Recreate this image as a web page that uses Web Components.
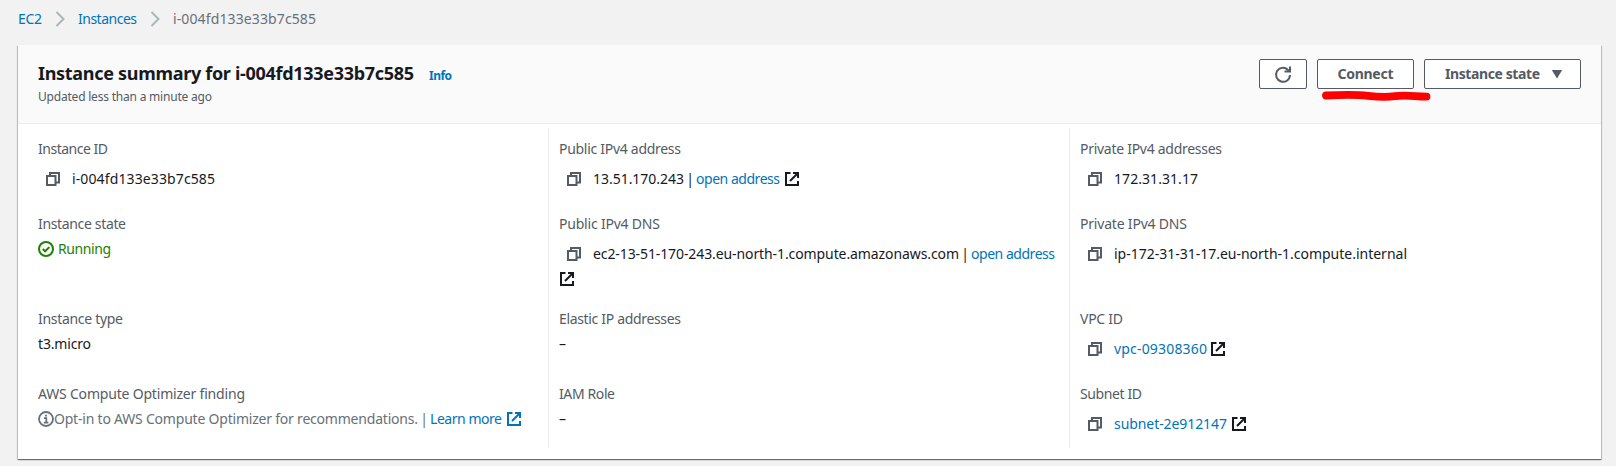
<!DOCTYPE html>
<html lang="en">
<head>
<meta charset="utf-8">
<title>Instance summary</title>
<style>
body{margin:0;background:#f2f2f2;font:14px/25px "Noto Sans","Open Sans",sans-serif;color:#16191f}
</style>
</head>
<body>
<instance-page></instance-page>
<script>
const define=(name,html,setup)=>{
  const t=document.createElement('template');t.innerHTML=html;
  customElements.define(name,class extends HTMLElement{
    connectedCallback(){
      if(this.shadowRoot)return;
      this.attachShadow({mode:'open'}).append(t.content.cloneNode(true));
      if(setup)setup.call(this,this.shadowRoot);
    }
  });
};

/* A run of text spaced out to the width in its w attribute */
define('fit-text',`<style>:host{display:inline-block;white-space:nowrap;font-variant-ligatures:none}</style><span><slot></slot></span>`,function(r){
  const w=+this.getAttribute('w'),n=this.textContent.length;
  const natural=r.querySelector('span').getBoundingClientRect().width;
  this.style.letterSpacing=(w-natural)/Math.max(1,n-1)+'px';
  this.style.width=w+'px';
});

const icons={
  copy:'<g fill="none" stroke="currentColor" stroke-width="2"><path d="M2 5h8.500v9H2z"/><path d="M5 5V2h9v9.500h-3.500"/></g>',
  external:'<g fill="none" stroke="currentColor" stroke-width="2"><path d="M6.500 2H2v12h12v-4"/><path d="M9 2h5v5M14 2L6 10"/></g>',
  check:'<g fill="none" stroke="currentColor" stroke-width="2"><circle cx="8" cy="8" r="7"/><path d="M4.800 8l2.300 2.300 4.200-4.200"/></g>',
  info:'<g fill="none" stroke="currentColor" stroke-width="1.800"><circle cx="8" cy="8" r="7"/><path d="M6 7.200h2.300v4.300M5.800 11.600h4.600M7 4.600h2"/></g>',
  refresh:'<g fill="none" stroke="currentColor" stroke-width="2"><path d="M15 9A7 7 0 1 1 12.800 3.700L15 5.500"/><path d="M15 .5V5.500H9.500"/></g>',
  chevron:'<path fill="none" stroke="currentColor" stroke-width="2" d="M4.500 1l7 7-7 7"/>',
  caret:'<path fill="currentColor" d="M2.800 4h10.400l-5.200 8.500z"/>'
};
define('ui-icon',`<style>:host{display:inline-block;width:16px;height:16px;vertical-align:-3px}svg{display:block;width:100%;height:100%;overflow:visible}</style><svg viewBox="0 0 16 16"></svg>`,function(r){
  r.querySelector('svg').innerHTML=icons[this.getAttribute('name')];
});

define('ui-link',`<style>:host{color:#0073bb}</style><slot></slot>`);

define('crumb-trail',`<style>
:host{display:flex;align-items:center;height:38px;padding-left:18px;color:#687078;line-height:38px}
ui-icon{color:#aab7b8}
</style>
<ui-link><fit-text w="24">EC2</fit-text></ui-link><ui-icon name="chevron" style="margin:0 10px"></ui-icon>
<ui-link><fit-text w="59">Instances</fit-text></ui-link><ui-icon name="chevron" style="margin:0 10px"></ui-icon>
<fit-text w="143">i-004fd133e33b7c585</fit-text>`);

define('ui-button',`<style>
:host{display:flex;align-items:center;justify-content:center;box-sizing:border-box;height:30px;border:1px solid #545b64;border-radius:2px;background:#fff;color:#545b64;font-weight:700;line-height:28px}
</style><slot></slot>`);

/* Hand-drawn marker line under a control */
define('marker-line',`<style>:host{position:absolute;left:4px;top:31px;width:110px;height:12px;pointer-events:none}svg{display:block}</style>
<svg width="110" height="12"><path d="M5 5.500C18 4.800 37 4.600 47 5.800S64 7.700 74 6.200 92 6.200 105.500 6.600" fill="none" stroke="#fe0000" stroke-width="7.800" stroke-linecap="round"/></svg>`);

define('summary-header',`<style>
:host{display:flex;justify-content:space-between;height:78px;border-bottom:1px solid #eaeded;background:#fafafa;padding:0 20px;box-sizing:content-box}
.title{display:flex;align-items:baseline;height:30px;margin-top:13px;font-size:18px;font-weight:700;line-height:30px}
.title ui-link{font-size:12px;margin-left:15px}
.sub{font-size:12px;line-height:18px;color:#545b64}
.actions{display:flex;gap:10px;margin-top:14px}
.connect{position:relative;display:flex}
</style>
<div><div class="title"><fit-text w="376">Instance summary for i-004fd133e33b7c585</fit-text><ui-link><fit-text w="23">Info</fit-text></ui-link></div>
<div class="sub"><fit-text w="174">Updated less than a minute ago</fit-text></div></div>
<div class="actions">
<ui-button style="width:48px"><ui-icon name="refresh"></ui-icon></ui-button>
<div class="connect"><ui-button style="width:97px"><fit-text w="56">Connect</fit-text></ui-button><marker-line></marker-line></div>
<ui-button style="width:157px"><fit-text w="95" style="margin-left:5px">Instance state</fit-text><ui-icon name="caret" style="margin-left:9px"></ui-icon></ui-button>
</div>`);

define('info-field',`<style>
:host{display:block}
.label{color:#545b64}
.value{white-space:nowrap}
:host([copy]) .value{padding-top:5px}
.copy{color:#545b64;margin:0 11px 0 7px;display:none}
:host([copy]) .copy{display:inline-block}
</style><div class="label"><slot name="label"></slot></div><div class="value"><ui-icon class="copy" name="copy"></ui-icon><slot></slot></div>`);

define('info-column',`<style>
:host{display:grid;grid-template-rows:75px 95px 75px 75px;height:320px;box-sizing:border-box;padding-left:10px;border-left:1px solid #eaeded}
:host([first]){border-left-color:transparent;padding-left:9px}
::slotted(info-field){padding-top:8px}
</style><slot></slot>`);

define('summary-card',`<style>
:host{display:block;box-sizing:border-box;margin:7px 0 0 18px;width:1583px;height:414px;background:#fff;box-shadow:0 1px 1px 0 rgba(0,28,36,.4),1px 1px 1px 0 rgba(0,28,36,.18),-1px 1px 1px 0 rgba(0,28,36,.18)}
.cols{display:grid;grid-template-columns:520px 521px 1fr;padding:4px 0 0 10px}
.pipe{margin:0 2px;display:inline-block;width:8px;text-align:center}
.ext{margin-left:4px}
.ok{color:#1d8102}.muted{color:#687078}
</style>
<summary-header></summary-header>
<div class="cols">
<info-column first>
<info-field copy><fit-text slot="label" w="70">Instance ID</fit-text><fit-text w="143">i-004fd133e33b7c585</fit-text></info-field>
<info-field><fit-text slot="label" w="88">Instance state</fit-text><span class="ok"><ui-icon name="check"></ui-icon><fit-text w="53" style="margin-left:4px">Running</fit-text></span></info-field>
<info-field><fit-text slot="label" w="85">Instance type</fit-text><fit-text w="53">t3.micro</fit-text></info-field>
<info-field><fit-text slot="label" w="207">AWS Compute Optimizer finding</fit-text><span class="muted"><ui-icon name="info"></ui-icon><fit-text w="364">Opt-in to AWS Compute Optimizer for recommendations.</fit-text><span class="pipe">|</span></span><ui-link><fit-text w="72">Learn more</fit-text><ui-icon class="ext" name="external"></ui-icon></ui-link></info-field>
</info-column>
<info-column>
<info-field copy><fit-text slot="label" w="122">Public IPv4 address</fit-text><fit-text w="91">13.51.170.243</fit-text><span class="pipe">|</span><ui-link><fit-text w="84">open address</fit-text></ui-link><ui-icon class="ext" name="external"></ui-icon></info-field>
<info-field copy><fit-text slot="label" w="101">Public IPv4 DNS</fit-text><fit-text w="366">ec2-13-51-170-243.eu-north-1.compute.amazonaws.com</fit-text><span class="pipe">|</span><ui-link><fit-text w="84">open address</fit-text></ui-link><br><ui-icon name="external"></ui-icon></info-field>
<info-field><fit-text slot="label" w="122">Elastic IP addresses</fit-text>–</info-field>
<info-field><fit-text slot="label" w="56">IAM Role</fit-text>–</info-field>
</info-column>
<info-column>
<info-field copy><fit-text slot="label" w="142">Private IPv4 addresses</fit-text><fit-text w="84">172.31.31.17</fit-text></info-field>
<info-field copy><fit-text slot="label" w="107">Private IPv4 DNS</fit-text><fit-text w="293">ip-172-31-31-17.eu-north-1.compute.internal</fit-text></info-field>
<info-field copy><fit-text slot="label" w="43">VPC ID</fit-text><ui-link><fit-text w="93">vpc-09308360</fit-text></ui-link><ui-icon class="ext" name="external" style="margin-left:3px"></ui-icon></info-field>
<info-field copy><fit-text slot="label" w="62">Subnet ID</fit-text><ui-link><fit-text w="113">subnet-2e912147</fit-text></ui-link><ui-icon class="ext" name="external"></ui-icon></info-field>
</info-column>
</div>`);

define('instance-page',`<style>:host{display:block;height:466px;overflow:hidden}</style><crumb-trail></crumb-trail><summary-card></summary-card>`);
</script>
</body>
</html>
